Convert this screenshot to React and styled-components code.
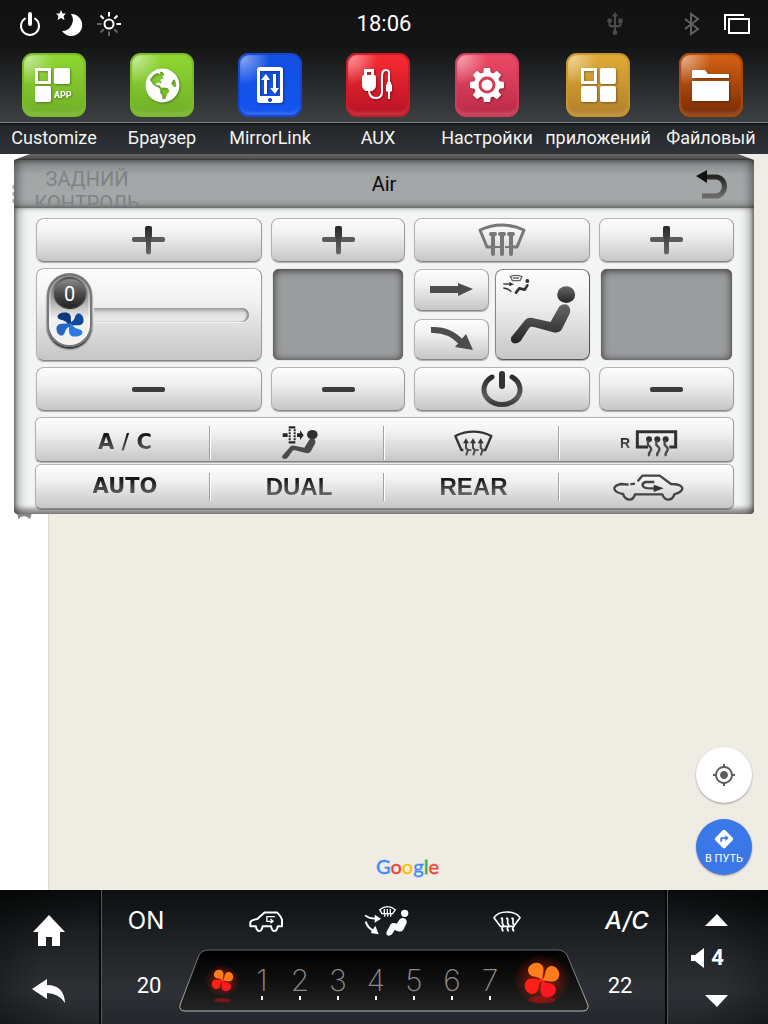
import React from "react";
import styled, { createGlobalStyle, css } from "styled-components";
import { MdUsb, MdMyLocation, MdDirections } from "react-icons/md";
import { FaGlobeAmericas } from "react-icons/fa";

const Global = createGlobalStyle`
  * { box-sizing: border-box; }
  body { margin: 0; font-family: Roboto, "Noto Sans", sans-serif; background: #111; }
  button { font: inherit; color: inherit; border: 0; padding: 0; margin: 0; background: none; cursor: pointer; }
  svg { display: block; flex: none; overflow: visible; }
`;

const Screen = styled.div`
  min-height: 100vh;
  display: flex;
  flex-direction: column;
`;

/* ---------- top ---------- */
const Header = styled.header`
  background: linear-gradient(#121212 0, #131313 45px, #25272a 80px, #3c4043 121px);
  color: #fff;
`;
const StatusBar = styled.div`
  height: 47px;
  display: grid;
  grid-template-columns: 1fr auto 1fr;
  align-items: center;
  padding: 0 18px;
`;
const StatusGroup = styled.div`
  display: flex;
  align-items: center;
  gap: ${(p) => p.$gap}px;
  justify-content: ${(p) => (p.$end ? "flex-end" : "flex-start")};
`;
const Clock = styled.time`
  font-size: 22px;
  line-height: 24px;
`;
const AppBar = styled.nav`
  display: grid;
  grid-template-columns: 108fr 108fr 108fr 108fr 110fr 112fr 114fr;
`;
const AppLink = styled.a`
  display: flex;
  flex-direction: column;
  align-items: center;
  color: #f4f4f4;
  text-decoration: none;
  padding-top: 6px;
`;
const AppTile = styled.span`
  width: 64px;
  height: 64px;
  border-radius: 11px;
  display: grid;
  place-items: center;
  background:
    radial-gradient(circle at 4px 4px, rgba(255, 255, 255, 0.5), rgba(255, 255, 255, 0) 28px),
    linear-gradient(${(p) => p.$from}, ${(p) => p.$to});
  box-shadow: inset 0 0 1px 2px ${(p) => p.$edge}, inset 0 -5px 3px rgba(255, 255, 255, 0.15);
  svg { filter: drop-shadow(1px 1px 1px rgba(0, 0, 0, 0.35)); }
`;
const AppLabel = styled.span`
  align-self: stretch;
  margin-top: 5px;
  height: 32px;
  padding-top: 3px;
  border-top: 1px solid #7d8183;
  background: linear-gradient(#0c0d0e 0, #232629 3px, #303338 100%);
  text-align: center;
  white-space: nowrap;
  font-size: 18px;
  line-height: 24px;
`;

/* ---------- map ---------- */
const Main = styled.main`
  flex: 1;
  position: relative;
  display: flex;
  min-height: 540px;
`;
const Sidebar = styled.aside`
  width: 49px;
  background: #fff;
  border-right: 1px solid #dcd9d1;
`;
const MapArea = styled.section`
  flex: 1;
  background: #efece4;
  display: grid;
  grid-template-columns: 1fr auto 1fr;
  align-items: end;
  padding: 0 16px 15px 0;
`;
const Google = styled.div`
  grid-column: 2;
  font-family: Lato, sans-serif;
  font-size: 20px;
  line-height: 24px;
  padding-left: 14px;
  margin-bottom: -3px;
  text-shadow: 0 0 2px #fff, 0 0 2px #fff;
`;
const Letter = styled.span`
  color: ${(p) => p.$c};
  font-weight: 500;
  -webkit-text-stroke: 1px ${(p) => p.$c};
  paint-order: stroke;
`;
const Fabs = styled.div`
  grid-column: 3;
  justify-self: end;
  display: flex;
  flex-direction: column;
  gap: 16px;
`;
const Fab = styled.button`
  width: 56px;
  height: 56px;
  border-radius: 50%;
  display: flex;
  flex-direction: column;
  align-items: center;
  justify-content: center;
  gap: 1px;
  font-size: 11px;
  line-height: 16px;
  background: ${(p) => (p.$primary ? "#3b78e7" : "#fff")};
  color: ${(p) => (p.$primary ? "#fff" : "#5d5d5d")};
  box-shadow: 0 1px 2px rgba(0, 0, 0, 0.35);
`;

/* ---------- climate panel ---------- */
const Panel = styled.section`
  position: absolute;
  top: 0;
  left: 14px;
  right: 14px;
  color: #333;
`;
const PanelLip = styled.div`
  height: 6px;
  background: linear-gradient(#666 0, #555 4px, #333 6px);
  clip-path: polygon(16px 0, calc(100% - 16px) 0, 100% 100%, 0 100%);
`;
const PanelHead = styled.header`
  position: relative;
  overflow: hidden;
  height: 48px;
  display: grid;
  grid-template-columns: 1fr auto 1fr;
  align-items: center;
  padding: 0 26px;
  background: linear-gradient(#686a6b 0, #8b8e8f 5px, #a1a5a6 14px, #a4a8a9 38px, #999c9d 44px, #77797a 48px);
  box-shadow: inset 8px 0 10px -5px rgba(0, 0, 0, 0.45), inset -8px 0 10px -5px rgba(0, 0, 0, 0.45);
`;
const PanelTitle = styled.h1`
  grid-column: 2;
  margin: 0;
  color: #0c0c0c;
  font-size: 20px;
  line-height: 24px;
  font-weight: 400;
`;
const BackButton = styled.button`
  justify-self: end;
`;
const GhostText = styled.span`
  position: absolute;
  left: 10px;
  top: 7px;
  width: 126px;
  height: 39px;
  overflow: hidden;
  text-align: center;
  font-size: 20px;
  line-height: 24px;
  color: #7f8384;
`;
const PanelBody = styled.div`
  background: #f3f5f5;
  border-radius: 0 0 4px 4px;
  padding: 10px 20px 5px 22px;
  box-shadow: inset 9px 0 9px -3px rgba(0, 0, 0, 0.28), inset -9px 0 9px -3px rgba(0, 0, 0, 0.28),
    inset 3px 0 4px -2px rgba(0, 0, 0, 0.4), inset -3px 0 4px -2px rgba(0, 0, 0, 0.4),
    inset 0 -6px 4px rgba(0, 0, 0, 0.36);
`;
const Controls = styled.div`
  display: grid;
  grid-template-columns: 226fr 135fr 176fr 135fr;
  grid-template-rows: 44px 93px 44px;
  gap: 6px 9px;
`;
const metal = css`
  background: linear-gradient(#fdfdfd, #f1f1f1 35%, #c6c6c6);
  border: 1px solid #b3b3b3;
  border-bottom-color: #858585;
  border-right-color: #9c9c9c;
  box-shadow: 0 1px 1px rgba(0, 0, 0, 0.3), inset 0 1px 0 #fff;
`;
const Key = styled.button`
  ${metal}
  border-radius: 8px;
  display: grid;
  place-items: center;
`;
const ModeKey = styled(Key)`
  position: relative;
  border-color: ${(p) => (p.$active ? "#888 #555 #555 #888" : "#b3b3b3 #9c9c9c #858585 #b3b3b3")};
  grid-row: ${(p) => (p.$tall ? "1 / 3" : "auto")};
  grid-column: ${(p) => (p.$tall ? 2 : 1)};
`;
const ModeGrid = styled.div`
  display: grid;
  grid-template-columns: 75fr 95fr;
  grid-template-rows: 1fr 1fr;
  gap: 8px 6px;
  padding: 1px 0;
`;
const ModeBadge = styled.span`
  position: absolute;
  left: 6px;
  top: 4px;
`;
const Display = styled.output`
  margin: 1px 2px;
  border-radius: 6px;
  background: #9b9c9e;
  box-shadow: inset 0 1px 7px 1px rgba(0, 0, 0, 0.6), 0 0 1px #666;
`;
const SliderBox = styled.label`
  ${metal}
  position: relative;
  border-radius: 8px;
  display: flex;
  align-items: center;
  padding: 0 12px 10px 10px;
`;
const Range = styled.input`
  position: absolute;
  inset: 0;
  width: 100%;
  height: 100%;
  margin: 0;
  opacity: 0;
`;
const Knob = styled.span`
  width: 45px;
  height: 74px;
  border-radius: 23px;
  border: 2px solid #777;
  background: linear-gradient(#4a4a4a 0, #9a9a9a 22px, #f2f2f2 44px, #f4f0f0);
  box-shadow: 0 2px 2px #222, inset 0 0 0 2px rgba(255, 255, 255, 0.35);
  display: flex;
  flex-direction: column;
  align-items: center;
  padding-top: 4px;
  gap: 4px;
`;
const KnobValue = styled.span`
  width: 32px;
  height: 29px;
  border-radius: 50%;
  background: linear-gradient(#8a8a8a, #4c4c4c 50%, #222);
  box-shadow: 0 1px 1px #111;
  color: #fff;
  font-size: 20px;
  line-height: 31px;
  text-align: center;
`;
const Track = styled.span`
  flex: 1;
  height: 14px;
  margin: 10px 0 0 2px;
  border-radius: 0 7px 7px 0;
  background: linear-gradient(#a0a0a0, #dcdcdc 5px, #f0f0f0);
  box-shadow: inset -2px 0 2px #888, 0 1px 0 #f3f3f3;
`;
const Strip = styled.div`
  ${metal}
  margin: ${(p) => (p.$first ? "6px 0 2px -1px" : "0 0 0 -1px")};
  height: 45px;
  border-radius: 6px;
  display: grid;
  grid-template-columns: 173fr 174fr 175fr 175fr;
`;
const StripKey = styled.button`
  margin: 8px 0 7px;
  padding-left: 5px;
  display: flex;
  align-items: center;
  justify-content: center;
  gap: 6px;
  & + & { border-left: 1px solid #a2a2a2; box-shadow: inset 1px 0 0 #fff; }
`;
const KeyText = styled.span`
  font-family: ${(p) => (p.$wide ? '"DejaVu Sans"' : '"Liberation Sans"')}, sans-serif;
  font-weight: 700;
  font-size: ${(p) => p.$size}px;
  line-height: 26px;
  padding-bottom: ${(p) => (p.$wide ? 2 : 0)}px;
  background: linear-gradient(#161616 20%, #6b6b6b 85%);
  background-clip: text;
  color: transparent;
`;

/* ---------- bottom bar ---------- */
const Footer = styled.footer`
  height: 134px;
  display: grid;
  grid-template-columns: 102px 1fr 101px;
  color: #fff;
  background: linear-gradient(#0d0f10, #1d2124 35%, #2d3135 75%, #24272b);
`;
const Side = styled.div`
  display: flex;
  flex-direction: column;
  align-items: center;
  background: radial-gradient(ellipse at ${(p) => (p.$right ? "0" : "100%")} 60%, rgba(0, 0, 0, 0) 40%, rgba(0, 0, 0, 0.55));
  border-${(p) => (p.$right ? "left" : "right")}: 1px solid #55585a;
  box-shadow: ${(p) => (p.$right ? "-2px 0 0 #060707" : "inset -2px 0 0 #060707")};
  padding: ${(p) => (p.$right ? "24px 3px 17px 0" : "25px 3px 20px 0")};
  justify-content: space-between;
`;
const Volume = styled.div`
  display: flex;
  align-items: center;
  gap: 7px;
  padding: 0 18px 6px 0;
  font-size: 22px;
  line-height: 24px;
  font-weight: 700;
`;
const Climate = styled.div`
  display: flex;
  flex-direction: column;
`;
const ClimateRow = styled.div`
  height: 59px;
  padding: 3px 18px 0 22px;
  display: flex;
  align-items: center;
  justify-content: space-between;
`;
const ClimateKey = styled.button`
  width: 44px;
  display: flex;
  justify-content: center;
  font-family: Inter, sans-serif;
  font-size: 24px;
  line-height: 28px;
  font-style: ${(p) => (p.$italic ? "italic" : "normal")};
  font-weight: ${(p) => (p.$italic ? 500 : 400)};
`;
const GaugeRow = styled.div`
  display: grid;
  grid-template-columns: 77px 1fr 78px;
`;
const Temp = styled.span`
  padding: ${(p) => (p.$right ? "24px 16px 0 0" : "24px 0 0 17px")};
  text-align: center;
  font-size: 22px;
  line-height: 26px;
`;
const Gauge = styled.div`
  position: relative;
  height: 63px;
  display: grid;
  grid-template-columns: 64fr 266fr 80fr;
`;
const GaugeShape = styled.svg`
  position: absolute;
  inset: 0;
  width: 100%;
  height: 100%;
`;
const FanKey = styled.button`
  position: relative;
  display: grid;
  place-items: center;
  padding: ${(p) => (p.$large ? "0 14px 1px 0" : "0 0 1px 22px")};
`;
const Levels = styled.div`
  position: relative;
  display: grid;
  grid-template-columns: repeat(7, 1fr);
`;
const Level = styled.button`
  display: flex;
  flex-direction: column;
  align-items: center;
  padding-top: 16px;
  font-family: Inter, sans-serif;
  font-weight: 200;
  font-size: 30px;
  line-height: 31px;
  color: #8c8c8c;
  &::after { content: ""; width: 2px; height: 4px; background: #fff; }
`;

/* ---------- drawings ---------- */
const Shades = () => (
  <svg width="0" height="0" style={{ position: "absolute" }} aria-hidden="true">
    <defs>
      <linearGradient id="dark" x1="0" y1="0" x2="0" y2="1">
        <stop offset="0" stopColor="#262626" /><stop offset="1" stopColor="#6a6a6a" />
      </linearGradient>
      <linearGradient id="darkUp" x1="0" y1="0" x2="0" y2="1">
        <stop offset="0" stopColor="#666" /><stop offset="1" stopColor="#242424" />
      </linearGradient>
      <linearGradient id="ring" x1="0" y1="0" x2="0" y2="1">
        <stop offset="0" stopColor="#2c2c2c" /><stop offset="0.7" stopColor="#5c5c5c" /><stop offset="1" stopColor="#3a3a3a" />
      </linearGradient>
      <linearGradient id="well" x1="0" y1="0" x2="0" y2="1">
        <stop offset="0" stopColor="#000" /><stop offset="0.5" stopColor="#101010" /><stop offset="1" stopColor="#242424" />
      </linearGradient>
      <linearGradient id="rim" x1="0" y1="0" x2="0" y2="1">
        <stop offset="0" stopColor="#666" /><stop offset="1" stopColor="#b8b8b8" />
      </linearGradient>
      <radialGradient id="glow">
        <stop offset="0" stopColor="#ff3000" stopOpacity="0.6" /><stop offset="1" stopColor="#ff2000" stopOpacity="0" />
      </radialGradient>
    </defs>
  </svg>
);

const BLADE = "M3 4C5 -8 3 -18 3 -28C2 -44 -8 -49 -22 -47C-40 -45 -47 -33 -42 -25C-34 -13 -16 -22 -5 3Z";
const HOT_BLADE = "M2 2C-6 -6 -14 -5 -26 -5C-42 -5 -50 -18 -45 -31C-38 -47 -18 -52 -7 -41C3 -30 -4 -14 2 2Z";
const Blades = ({ d, fills }) => (
  <>
    {[0, 90, 180, 270].map((a, i) => (
      <path key={a} d={d} fill={fills[i]} transform={`rotate(${a})`} />
    ))}
  </>
);
const BlueFan = () => (
  <svg width="28" height="25" viewBox="-49 -49 98 98" preserveAspectRatio="none">
    <Blades d={BLADE} fills={["#0c3a7c", "#114a9a", "#2c7ae0", "#2468c4"]} />
  </svg>
);
const HotFan = ({ size, shadow }) => (
  <svg width={size} height={size} viewBox="-50 -50 100 100">
    <ellipse rx="85" ry="76" fill="url(#glow)" />
    <ellipse cy={shadow} rx="40" ry="11" fill="#e01010" opacity="0.45" />
    <g transform="rotate(12)"><Blades d={HOT_BLADE} fills={["#ff7d1a", "#ff7a1c", "#fb1820", "#ff2018"]} /></g>
  </svg>
);
const Plus = () => (
  <svg width="33" height="29" viewBox="0 0 33 29">
    <rect x="0" y="11" width="33" height="5" rx="2" fill="#5a5a5a" />
    <path d="M13 2a2 2 0 0 1 2-2h3a2 2 0 0 1 2 2v9l-1 1v14a2 2 0 0 1-5 0V12l-1-1z" fill="url(#dark)" />
  </svg>
);
const Minus = () => (
  <svg width="33" height="5" viewBox="0 0 33 5"><rect width="33" height="5" rx="2" fill="#3c3c3c" /></svg>
);
const SEAT = "M36 560L78 508Q86 499 100 502L154 514L180 468Q190 458 204 462Q216 470 212 488L188 536Q182 546 168 546L104 529Q94 526 90 532L64 572Q56 580 44 578Q32 574 36 560Z";
const Seat = ({ fill = "url(#darkUp)" }) => (
  <g fill={fill}><ellipse cx="201" cy="432" rx="27" ry="25" /><path d={SEAT} /></g>
);
const SeatIcon = () => (
  <svg width="66" height="58" viewBox="33 406 197 174"><Seat /></svg>
);
const FrontDefrost = () => (
  <svg width="48" height="34" viewBox="0 0 48 34" fill="none" stroke="#777" strokeWidth="3" strokeLinejoin="round">
    <path d="M15 24H9L2 7Q24 -3 46 7L39 24H33" />
    <path d="M17 24H22M27 24H32" strokeWidth="2" />
    {[15, 24, 33].map((x) => (
      <path key={x} d={`M${x} 11V31M${x - 2} 11h4`} strokeWidth="4" strokeLinecap="round" />
    ))}
  </svg>
);
const Windscreen = () => (
  <svg width="39" height="26" viewBox="0 0 117 78" fill="none" stroke="#333" strokeWidth="7" strokeLinejoin="round">
    <path d="M28 60H22L4 18Q58 -8 112 18L94 60H88" />
    <path d="M40 60H52M64 60H74" strokeWidth="5" />
    {[36, 57, 80].map((x) => (
      <g key={x}>
        <path d={`M${x} 36V54q8 6 4 12t-2 10`} strokeWidth="6" stroke="#4a4a4a" />
        <path d={`M${x - 9} 40L${x} 25L${x + 9} 40Z`} stroke="none" fill="#333" />
      </g>
    ))}
  </svg>
);
const WhiteScreen = () => (
  <svg width="28" height="21" viewBox="0 0 84 63" fill="none" stroke="#fff" strokeWidth="5" strokeLinejoin="round">
    <path d="M3 20Q14 3 42 3T81 20L62 46H22Z" />
    {[27, 43, 59].map((x) => <path key={x} d={`M${x - 4} 22h5V38q6 5 1 10t2 13`} />)}
  </svg>
);
const SeatAirWhite = () => (
  <svg width="46" height="32" viewBox="0 0 138 96" fill="none" stroke="#fff">
    <path d="M3 31Q18 42 36 41" strokeWidth="5" /><path d="M32 29l19 12l-19 12z" fill="#fff" stroke="none" />
    <path d="M5 50Q12 72 32 78" strokeWidth="6" /><path d="M34 62l10 26l-24 -4z" fill="#fff" stroke="none" />
    <path d="M47 14Q70 -4 94 14L86 26H54Z" strokeWidth="4" />
    {[61, 70, 79].map((x) => <path key={x} d={`M${x} 12V26q4 4 0 9`} strokeWidth="4" />)}
    <circle cx="122" cy="25" r="11" fill="#fff" stroke="none" />
    <path d="M68 80L80 58Q86 51 98 56L106 44Q112 36 124 41Q130 46 127 56L118 74Q112 82 102 79L92 75L84 88Q76 95 70 91Q65 87 68 80Z" fill="#fff" stroke="none" />
  </svg>
);
const SeatAirSmall = () => (
  <svg width="28" height="21" viewBox="0 0 84 63" fill="none" stroke="#333">
    <path d="M25 8Q42 0 60 8L54 20H31Z M33 12h18" stroke="#666" strokeWidth="4" />
    <path d="M4 30H24" strokeWidth="4" /><path d="M22 24l14 7l-14 6z" fill="#333" stroke="none" />
    <path d="M4 42Q22 44 28 54" strokeWidth="4" />
    <circle cx="76" cy="21" r="6" fill="#333" stroke="none" />
    <path d="M42 56L52 43L68 47L76 34" strokeWidth="8" strokeLinecap="round" strokeLinejoin="round" />
  </svg>
);
const FilterSeat = () => (
  <svg width="37" height="34" viewBox="847 56 111 102">
    <ellipse cx="941" cy="82" rx="16" ry="14" fill="#303030" />
    <g transform="translate(831 -146) scale(.56 .52)"><path d={SEAT} fill="#4a4a4a" /></g>
    <path d="M870 60h20M870 105h20" stroke="#262626" strokeWidth="7" />
    <path d="M873 66v36M888 66v36" stroke="#262626" strokeWidth="6" strokeDasharray="6 3" />
    <path d="M852 78h15v11h-15zM895 78h9v-9l11 15l-11 14v-9h-9z" fill="#262626" />
  </svg>
);
const RearScreen = () => (
  <svg width="41" height="27" viewBox="0 0 123 81" fill="none" stroke="#303030">
    <path d="M36 51H4V5H119V51H100" strokeWidth="9" />
    {[36, 61, 86].map((x) => (
      <g key={x}><circle cx={x + 3} cy="28" r="9" fill="#303030" stroke="none" />
        <path d={`M${x} 30V45q14 10 7 19t-3 14`} strokeWidth="7" stroke="#4a4a4a" /></g>
    ))}
  </svg>
);
const CarLoop = () => (
  <svg width="71" height="27" viewBox="688 204 213 81" fill="none" stroke="#444" strokeWidth="7" strokeLinejoin="round">
    <path d="M735 236L712 234Q692 238 692 248Q694 260 718 264Q724 281 738 281Q750 280 754 265H836Q842 281 854 281Q868 280 872 265Q897 258 896 246Q892 234 862 234L828 209H776L762 226" />
    <path d="M740 235l14 -2" />
    <path d="M812 228H786Q775 231 777 239Q781 247 800 247H814" />
    <path d="M810 236L840 247L810 258Z" fill="#333" stroke="none" />
  </svg>
);
const CarWhite = () => (
  <svg width="34" height="21" viewBox="751 88 103 63" fill="none" stroke="#fff" strokeWidth="6" strokeLinejoin="round">
    <path d="M770 134H755V122Q757 115 776 112L798 92H836Q848 104 851 114V134H838Q836 148 828 148Q820 148 818 134H792Q790 148 782 148Q774 148 772 134Z" />
    <path d="M830 105H805V119H822M816 112l8 7l-8 6" strokeWidth="4" />
  </svg>
);
const Power = () => (
  <svg width="42" height="36" viewBox="0 0 42 36" fill="none" stroke="url(#ring)" strokeLinecap="round">
    <path d="M11 6A18 15 0 1 0 31 6" strokeWidth="5" />
    <rect x="18" y="0" width="6" height="18" rx="3" fill="#333" stroke="none" />
  </svg>
);
const PowerSmall = () => (
  <svg width="24" height="26" viewBox="0 0 24 26" fill="none" stroke="#fff" strokeLinecap="round">
    <path d="M7 7.500A9 9 0 1 0 17 7.500" strokeWidth="2" /><path d="M12 3V13" strokeWidth="4" />
  </svg>
);
const Moon = () => (
  <svg width="27" height="27" viewBox="0 0 27 27" fill="#fff">
    <path d="M15 4A11 11 0 1 1 6 21A11 11 0 0 0 15 4Z" />
    <path d="M5 0l1.500 3.500 3.500 0-2.500 2.500 1 4-3.500-2-3.500 2 1-4-2.500-2.500 3.500 0z" />
  </svg>
);
const Sun = () => (
  <svg width="24" height="24" viewBox="-12 -12 24 24" fill="none" stroke="#fff" strokeWidth="2">
    <circle r="4.500" />
    {[0, 45, 90, 135, 180, 225, 270, 315].map((a) => (
      <path key={a} d="M0 -7.500V-12" transform={`rotate(${a})`} stroke={a > 90 && a < 315 ? "#666" : "#fff"} />
    ))}
  </svg>
);
const Bluetooth = () => (
  <svg width="16" height="22" viewBox="0 0 16 22" fill="none" stroke="#606060" strokeWidth="2">
    <path d="M1 6L14 16L7 21V1L14 6L1 16" />
  </svg>
);
const Windows = () => (
  <svg width="26" height="20" viewBox="0 0 26 20" fill="none" stroke="#fff" strokeWidth="2">
    <path d="M1 16V1H20" /><rect x="5" y="5" width="20" height="14" />
  </svg>
);
const tile = (x, y) => <rect x={x} y={y} width="16" height="16" rx="2" fill="#fff" />;
const Customize = () => (
  <svg width="38" height="34" viewBox="0 0 38 34">
    <rect x="1.500" y="1.500" width="13" height="13" fill="none" stroke="#fff" strokeWidth="3" />
    {tile(19, 0)}{tile(0, 18)}
    <text x="19" y="30" fill="#fff" fontFamily="Roboto, sans-serif" fontWeight="700" fontSize="9">APP</text>
  </svg>
);
const Apps = () => (
  <svg width="35" height="34" viewBox="0 0 35 34">
    <rect x="1.500" y="1.500" width="13" height="13" fill="none" stroke="#fff" strokeWidth="3" />
    {tile(19, 0)}{tile(0, 18)}{tile(19, 18)}
  </svg>
);
const Phone = () => (
  <svg width="26" height="36" viewBox="0 0 26 36">
    <path fillRule="evenodd" fill="#fff" d="M3 0h20a3 3 0 0 1 3 3v30a3 3 0 0 1-3 3H3a3 3 0 0 1-3-3V3a3 3 0 0 1 3-3zM3 4v25h20V4zM13 31a2 2 0 1 0 .1 0z" />
    <path fill="#fff" d="M7 27V13H4l5-6 4 6h-3v14zM16 7h3v14h3l-4 6-5-6h3z" />
  </svg>
);
const Aux = () => (
  <svg width="32" height="32" viewBox="0 0 32 32" fill="none">
    <path d="M7 21q0 8 7 8 6 0 6-6V7q0-6 4-6t3 5v8" stroke="#fff" strokeWidth="2" />
    <path d="M0 8q0-2 2-2h10q2 0 2 2v8q0 4-4 6H4q-4-2-4-6zM25 13h4v2l1 1v6l-2 1h-2l-2-1v-6l1-1zM26 22h2v8h-2z" fill="#fff" />
    <path d="M2 0h10v7H9V3H5v4H2z" fill="#fff" />
  </svg>
);
const Gear = () => (
  <svg width="34" height="34" viewBox="-17 -17 34 34">
    {[0, 45, 90, 135].map((a) => <path key={a} d="M-3 -17h6l1 6v22l-1 6h-6l-1-6v-22z" fill="#fff" transform={`rotate(${a})`} />)}
    <circle r="13" fill="#fff" /><circle r="7" fill="none" stroke="#d93a55" strokeWidth="3" />
  </svg>
);
const Folder = () => (
  <svg width="38" height="32" viewBox="0 0 38 32" fill="#fff">
    <path d="M0 9V2q0-1 1-1h12l3 4h20q1 0 1 1v3zM0 12h37v19q0 1-1 1H1q-1 0-1-1z" />
  </svg>
);
const UTurn = () => (
  <svg width="32" height="29" viewBox="0 0 32 29">
    <path d="M10 7H20a8 9 0 0 1 0 19H6" fill="none" stroke="url(#dark)" strokeWidth="5" />
    <path d="M0 6L11 0V13Z" fill="#111" />
  </svg>
);
const ArrowRight = () => (
  <svg width="43" height="13" viewBox="0 0 43 13"><path d="M0 3h28V0l15 6-15 7v-3H0z" fill="#4c4c4c" /></svg>
);
const ArrowDown = () => (
  <svg width="42" height="24" viewBox="0 0 42 24">
    <path d="M0 3Q18 2 30 15" fill="none" stroke="#4c4c4c" strokeWidth="6" /><path d="M24 20L35 7L42 23Z" fill="#4c4c4c" />
  </svg>
);
const Home = () => (
  <svg width="32" height="31" viewBox="0 0 32 31" fill="#fff"><path d="M16 0L32 17H27V31H19V22H13V31H5V17H0Z" /></svg>
);
const BackArrow = () => (
  <svg width="34" height="25" viewBox="0 0 34 25" fill="#fff"><path d="M0 10L15 0V6Q32 6 33 24Q26 14 15 14V20Z" /></svg>
);
const Triangle = ({ down }) => (
  <svg width="23" height="12" viewBox="0 0 23 12" fill="#fff"><path d={down ? "M0 0H23L12 12Z" : "M0 12H23L12 0Z"} /></svg>
);
const Speaker = () => (
  <svg width="13" height="20" viewBox="0 0 13 20" fill="#fff"><path d="M0 7H4L13 0V20L4 13H0Z" /></svg>
);
const Nub = styled.svg`
  position: absolute;
  left: ${(p) => p.$x}px;
  top: ${(p) => p.$y}px;
`;

const APPS = [
  ["Customize", "#90d932", "#6fae27", "#7aba28", <Customize />],
  ["Браузер", "#90d932", "#6fae27", "#7aba28", <FaGlobeAmericas size={35} color="#fff" />],
  ["MirrorLink", "#1450e0", "#1453f0", "#1048d4", <Phone />],
  ["AUX", "#fb2b33", "#b51225", "#cf1a27", <Aux />],
  ["Настройки", "#ef4b66", "#b92a47", "#d23c57", <Gear />],
  ["приложений", "#e3ac36", "#b07f2a", "#c8942e", <Apps />],
  ["Файловый", "#d86313", "#762a06", "#a9480d", <Folder />],
];

const GOOGLE = [["G", "#4285f4"], ["o", "#ea4335"], ["o", "#fbbc05"], ["g", "#4285f4"], ["l", "#34a853"], ["e", "#ea4335"]];

export default function App() {
  return (
    <Screen>
      <Global />
      <Shades />
      <Header>
        <StatusBar>
          <StatusGroup $gap={14}>
            <PowerSmall /><Moon /><Sun />
          </StatusGroup>
          <Clock>18:06</Clock>
          <StatusGroup $gap={24} $end>
            <StatusGroup $gap={56}><MdUsb size={26} color="#4a4a4a" /><Bluetooth /></StatusGroup>
            <Windows />
          </StatusGroup>
        </StatusBar>
        <AppBar>
          {APPS.map(([name, from, to, edge, icon]) => (
            <AppLink href="#" key={name}>
              <AppTile $from={from} $to={to} $edge={edge}>{icon}</AppTile>
              <AppLabel>{name}</AppLabel>
            </AppLink>
          ))}
        </AppBar>
      </Header>

      <Main>
        <Sidebar />
        <MapArea>
          <Google>
            {GOOGLE.map(([ch, c], i) => <Letter $c={c} key={i}>{ch}</Letter>)}
          </Google>
          <Fabs>
            <Fab aria-label="Моё местоположение"><MdMyLocation size={24} /></Fab>
            <Fab $primary><MdDirections size={22} />В ПУТЬ</Fab>
          </Fabs>
        </MapArea>

        <Nub $x={16} $y={359} width="16" height="6" viewBox="0 0 16 6" aria-hidden="true">
          <path d="M0 0h16l-1 3-1 3-3-2-3-1-3 1-3 2v-3z" fill="#888" />
        </Nub>
        <Nub $x={12} $y={31} width="4" height="18" viewBox="0 0 4 18" aria-hidden="true">
          <path d="M2 0v4M2 7v4M2 14v4" stroke="#b0b0b0" strokeWidth="3" />
        </Nub>
        <Panel>
          <PanelLip />
          <PanelHead>
            <GhostText>ЗАДНИЙ КОНТРОЛЬ</GhostText>
            <PanelTitle>Air</PanelTitle>
            <BackButton aria-label="Back"><UTurn /></BackButton>
          </PanelHead>
          <PanelBody>
            <Controls>
              <Key aria-label="Fan up"><Plus /></Key>
              <Key aria-label="Left up"><Plus /></Key>
              <Key aria-label="Front defrost"><FrontDefrost /></Key>
              <Key aria-label="Right up"><Plus /></Key>

              <SliderBox>
                <Knob><KnobValue>0</KnobValue><BlueFan /></Knob>
                <Track />
                <Range type="range" min="0" max="7" defaultValue="0" aria-label="Fan speed" />
              </SliderBox>
              <Display />
              <ModeGrid>
                <ModeKey aria-label="Face"><ArrowRight /></ModeKey>
                <ModeKey aria-label="Feet"><ArrowDown /></ModeKey>
                <ModeKey $tall $active aria-label="Air mode">
                  <ModeBadge><SeatAirSmall /></ModeBadge>
                  <SeatIcon />
                </ModeKey>
              </ModeGrid>
              <Display />

              <Key aria-label="Fan down"><Minus /></Key>
              <Key aria-label="Left down"><Minus /></Key>
              <Key aria-label="Power"><Power /></Key>
              <Key aria-label="Right down"><Minus /></Key>
            </Controls>
            <Strip $first>
              <StripKey><KeyText $wide $size={21}>A / C</KeyText></StripKey>
              <StripKey aria-label="Cabin filter"><FilterSeat /></StripKey>
              <StripKey aria-label="Windscreen"><Windscreen /></StripKey>
              <StripKey><KeyText $size={14}>R</KeyText><RearScreen /></StripKey>
            </Strip>
            <Strip>
              <StripKey><KeyText $wide $size={21}>AUTO</KeyText></StripKey>
              <StripKey><KeyText $size={24}>DUAL</KeyText></StripKey>
              <StripKey><KeyText $size={24}>REAR</KeyText></StripKey>
              <StripKey aria-label="Recirculation"><CarLoop /></StripKey>
            </Strip>
          </PanelBody>
        </Panel>
      </Main>

      <Footer>
        <Side>
          <button aria-label="Home"><Home /></button>
          <button aria-label="Back"><BackArrow /></button>
        </Side>
        <Climate>
          <ClimateRow>
            <ClimateKey>ON</ClimateKey>
            <ClimateKey aria-label="Recirculation"><CarWhite /></ClimateKey>
            <ClimateKey aria-label="Air mode"><SeatAirWhite /></ClimateKey>
            <ClimateKey aria-label="Defrost"><WhiteScreen /></ClimateKey>
            <ClimateKey $italic>A/C</ClimateKey>
          </ClimateRow>
          <GaugeRow>
            <Temp>20</Temp>
            <Gauge>
              <GaugeShape viewBox="0 0 410 63" preserveAspectRatio="none" aria-hidden="true">
                <path d="M20 6Q23 1 30 1H378Q385 1 388 6L409 56Q410 62 403 62H6Q0 62 1 56Z" fill="url(#well)" stroke="url(#rim)" />
              </GaugeShape>
              <FanKey aria-label="Slower"><HotFan size={21} shadow={94} /></FanKey>
              <Levels>
                {[1, 2, 3, 4, 5, 6, 7].map((n) => <Level key={n}>{n}</Level>)}
              </Levels>
              <FanKey $large aria-label="Faster"><HotFan size={34} shadow={58} /></FanKey>
            </Gauge>
            <Temp $right>22</Temp>
          </GaugeRow>
        </Climate>
        <Side $right>
          <button aria-label="Volume up"><Triangle /></button>
          <Volume><Speaker />4</Volume>
          <button aria-label="Volume down"><Triangle down /></button>
        </Side>
      </Footer>
    </Screen>
  );
}
